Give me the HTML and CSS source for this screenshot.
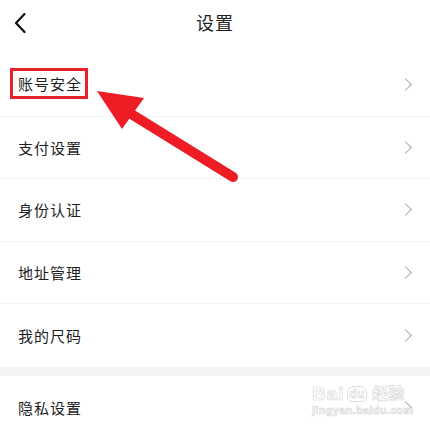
FILE: index.html
```html
<!DOCTYPE html>
<html lang="zh-CN">
<head>
    <meta charset="UTF-8">
    <meta name="viewport" content="width=device-width, initial-scale=1.0">
    <title>设置</title>
    <link rel="stylesheet" href="styles.css">
</head>
<body>
    <div class="page">
        <header class="topbar">
            <span class="back">
                <svg width="12" height="20" viewBox="0 0 12 20"><path d="M10.5 1 L2 10 L10.5 19" fill="none" stroke="#111" stroke-width="2.2" stroke-linecap="round" stroke-linejoin="round"/></svg>
            </span>
            <h1>设置</h1>
        </header>

        <ul class="menu">
            <li class="item"><span class="label marked">账号安全</span><span class="chev"></span></li>
            <li class="item"><span class="label">支付设置</span><span class="chev"></span></li>
            <li class="item"><span class="label">身份认证</span><span class="chev"></span></li>
            <li class="item"><span class="label">地址管理</span><span class="chev"></span></li>
            <li class="item last"><span class="label">我的尺码</span><span class="chev"></span></li>
        </ul>

        <div class="band"></div>

        <ul class="menu">
            <li class="item last"><span class="label">隐私设置</span><span class="chev"></span></li>
        </ul>

        <!-- annotation arrow -->
        <svg class="arrow" width="430" height="432" viewBox="0 0 430 432">
            <line x1="233" y1="177" x2="128" y2="112" stroke="#ee1c25" stroke-width="10" stroke-linecap="round"/>
            <polygon points="97,91 144,98 122,129" fill="#ee1c25"/>
        </svg>

        <!-- watermark -->
        <div class="watermark">
            <div class="wm-top"><span class="wm-bai">Bai</span><span class="wm-du">du</span><span class="wm-jy">经验</span></div>
            <div class="wm-url">jingyan.baidu.com</div>
        </div>
    </div>
</body>
</html>
```

FILE: styles.css
```css
* {
    box-sizing: border-box;
    margin: 0;
    padding: 0;
}

body {
    background: #fff;
    font-family: "Noto Sans CJK SC", "Noto Sans", sans-serif;
    color: #222;
    width: 430px;
    height: 432px;
    overflow: hidden;
}

.page {
    position: relative;
    width: 430px;
    height: 432px;
}

.topbar {
    height: 44px;
    display: flex;
    align-items: center;
    justify-content: center;
    position: relative;
    margin-bottom: 10px;
}

.topbar h1 {
    font-size: 18px;
    font-weight: 400;
    color: #222;
    letter-spacing: 1px;
}

.back {
    position: absolute;
    left: 14px;
    top: 13px;
    display: flex;
}

.menu {
    list-style: none;
}

.item {
    height: 62.6px;
    display: flex;
    align-items: center;
    justify-content: space-between;
    padding: 0 17px 0 18px;
    border-bottom: 1px solid #f3f3f3;
}

.item.last {
    border-bottom: none;
}

.label {
    font-size: 15px;
    line-height: 21px;
    letter-spacing: 1px;
    color: #1e1e1e;
}

.label.marked {
    border: 3px solid #e8212b;
    padding: 2px 3px 2px 5px;
    margin-left: -8px;
    margin-top: -2px;
}

.chev {
    width: 9px;
    height: 9px;
    border-top: 1.4px solid #a8a8ad;
    border-right: 1.4px solid #a8a8ad;
    transform: rotate(45deg);
    margin-right: 3px;
}

.band {
    height: 9px;
    background: #f4f4f7;
}

.arrow {
    position: absolute;
    left: 0;
    top: 0;
    pointer-events: none;
}

.watermark {
    position: absolute;
    left: 312px;
    top: 384px;
    color: #fff;
    -webkit-text-stroke: 0.7px #d9d9d9;
    font-family: "Liberation Sans", "Noto Sans CJK SC", sans-serif;
}

.wm-top {
    display: flex;
    align-items: flex-end;
    gap: 2px;
}

.wm-bai {
    font-size: 19px;
    font-weight: 700;
    line-height: 20px;
    letter-spacing: 1px;
}

.wm-du {
    font-size: 12px;
    font-weight: 700;
    line-height: 14px;
    border: 1px solid #dcdcdc;
    border-radius: 7px 7px 5px 5px;
    padding: 0 2px;
    margin-bottom: 2px;
}

.wm-jy {
    font-size: 16px;
    font-weight: 700;
    line-height: 20px;
    margin-left: 3px;
}

.wm-url {
    font-size: 11px;
    font-weight: 700;
    line-height: 13px;
    letter-spacing: 0.3px;
}
```
